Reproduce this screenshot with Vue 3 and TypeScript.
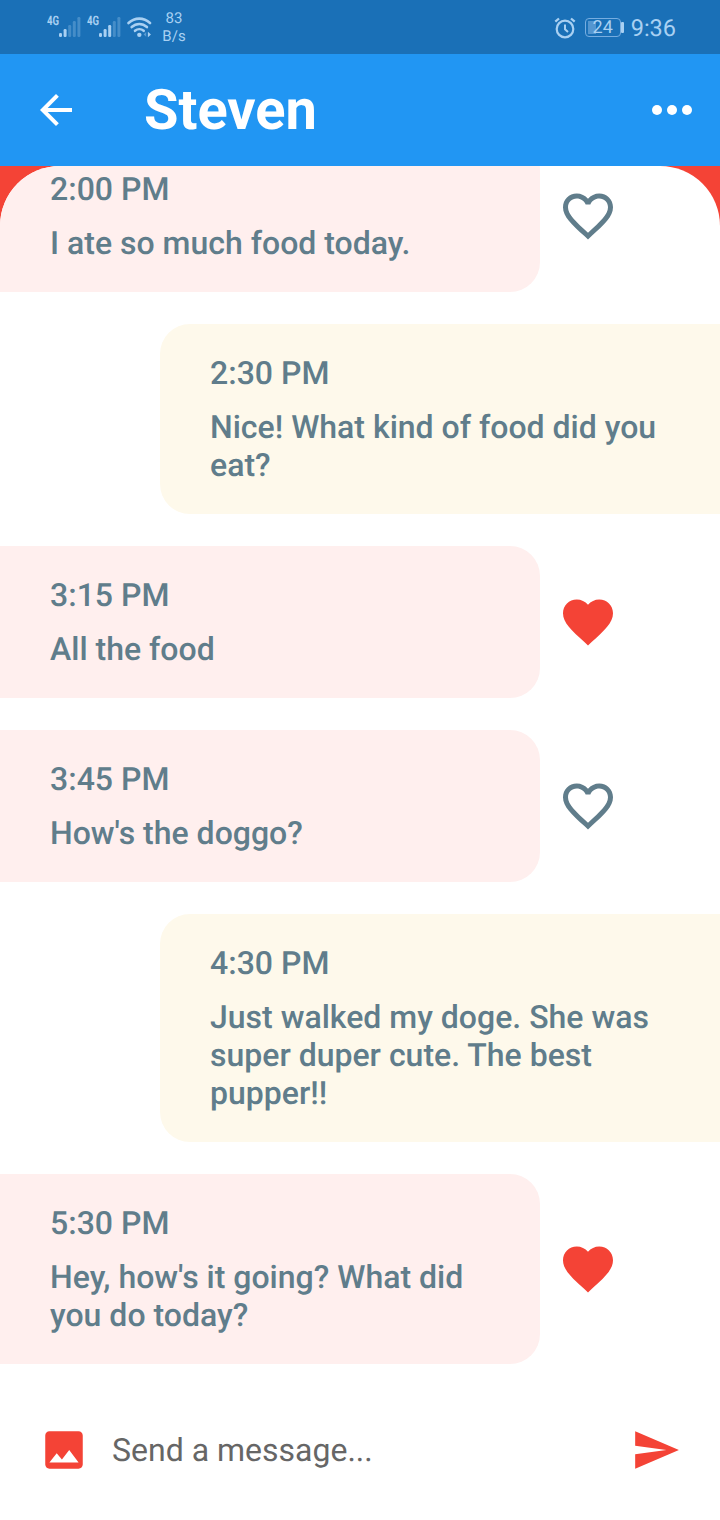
<script setup lang="ts">
interface Message {
  time: string
  text: string
  mine: boolean
  liked: boolean
}

const messages: Message[] = [
  { time: '2:00 PM', text: 'I ate so much food today.', mine: false, liked: false },
  { time: '2:30 PM', text: 'Nice! What kind of food did you eat?', mine: true, liked: false },
  { time: '3:15 PM', text: 'All the food', mine: false, liked: true },
  { time: '3:45 PM', text: "How's the doggo?", mine: false, liked: false },
  { time: '4:30 PM', text: 'Just walked my doge. She was super duper cute. The best pupper!!', mine: true, liked: false },
  { time: '5:30 PM', text: "Hey, how's it going? What did you do today?", mine: false, liked: true },
]

const signals: number[] = [2, 3]
</script>

<template>
  <div class="screen">
    <div class="status">
      <div class="status-left">
        <div v-for="(level, i) in signals" :key="i" class="signal">
          <span class="net">4G</span>
          <svg width="22" height="20" viewBox="0 0 22 20">
            <rect
              v-for="n in 5"
              :key="n"
              :x="(n - 1) * 4.6"
              :y="20 - n * 4"
              width="3"
              :height="n * 4"
              rx="1.2"
              fill="#a9d0f2"
              :opacity="n <= level ? 1 : 0.3"
            />
          </svg>
        </div>
        <svg class="wifi" width="25" height="21" viewBox="0 0 26 22">
          <g fill="none" stroke="#a9d0f2" stroke-width="2.7" stroke-linecap="round">
            <path d="M1.5 6.3C8.2 .2 17.4 .2 24 6.3" />
            <path d="M4.8 10.5C9.6 6.2 16 6.2 20.8 10.5" />
            <path d="M8.3 14.5C11 12.2 14.700 12.200 17.400 14.500" />
          </g>
          <circle cx="12.8" cy="18.7" r="2.3" fill="#a9d0f2" />
          <path d="M20 15.800v5l-2.700-2.500z" fill="#a9d0f2" opacity=".45" />
          <path d="M21.800 15.500v5.600l3.200-2.800z" fill="#a9d0f2" />
        </svg>
        <div class="speed"><span>83</span><span>B/s</span></div>
      </div>
      <div class="status-right">
        <svg class="alarm" width="22" height="22" viewBox="0 0 22 22" fill="none" stroke="#a9d0f2">
          <circle cx="11" cy="12" r="8.3" stroke-width="2.2" />
          <path d="M11 7.5v4.8l3 2.7" stroke-width="2" />
          <path d="M1.300 4.700L5 1.500M20.700 4.700L17 1.500" stroke-width="2.300" />
        </svg>
        <div class="battery"><span>24</span></div>
        <i class="battery-cap"></i>
        <span class="clock">9:36</span>
      </div>
    </div>

    <header class="bar">
      <svg width="48" height="48" viewBox="0 0 24 24" fill="#fff">
        <path d="M20 11H7.83l5.59-5.59L12 4l-8 8 8 8 1.41-1.41L7.83 13H20v-2z" />
      </svg>
      <h1>Steven</h1>
      <svg width="60" height="60" viewBox="0 0 24 24" fill="#fff">
        <circle cx="6" cy="12" r="2" />
        <circle cx="12" cy="12" r="2" />
        <circle cx="18" cy="12" r="2" />
      </svg>
    </header>

    <div class="backdrop">
      <main class="list">
        <div v-for="m in messages" :key="m.time" class="row" :class="{ mine: m.mine }">
          <div class="bubble">
            <div class="time">{{ m.time }}</div>
            <div class="text">{{ m.text }}</div>
          </div>
          <svg v-if="!m.mine" class="heart" :class="{ liked: m.liked }" width="60" height="60" viewBox="0 0 24 24">
            <path
              v-if="m.liked"
              d="M12 21.35l-1.45-1.32C5.4 15.36 2 12.28 2 8.5 2 5.42 4.42 3 7.5 3c1.74 0 3.41.81 4.5 2.09C13.09 3.81 14.76 3 16.5 3 19.58 3 22 5.42 22 8.5c0 3.78-3.4 6.86-8.55 11.54L12 21.35z"
            />
            <path
              v-else
              d="M16.5 3c-1.74 0-3.41.81-4.5 2.09C10.91 3.81 9.24 3 7.5 3 4.42 3 2 5.42 2 8.5c0 3.78 3.4 6.86 8.55 11.54L12 21.35l1.45-1.32C18.6 15.36 22 12.28 22 8.5 22 5.42 19.58 3 16.5 3zm-4.4 15.55l-.1.1-.1-.1C7.14 14.24 4 11.39 4 8.5 4 6.5 5.5 5 7.5 5c1.54 0 3.04.99 3.57 2.36h1.87C13.46 5.99 14.96 5 16.5 5c2 0 3.5 1.5 3.5 3.5 0 2.89-3.14 5.74-7.9 10.05z"
            />
          </svg>
        </div>
      </main>
    </div>

    <footer class="composer">
      <svg width="50" height="50" viewBox="0 0 24 24" fill="#f44336">
        <path d="M21 19V5c0-1.1-.9-2-2-2H5c-1.1 0-2 .9-2 2v14c0 1.1.9 2 2 2h14c1.1 0 2-.9 2-2zM8.5 13.5l2.5 3.01L14.5 12l4.5 6H5l3.5-4.500z" />
      </svg>
      <span class="hint">Send a message...</span>
      <svg width="50" height="50" viewBox="0 0 24 24" fill="#f44336">
        <path d="M2.01 21L23 12 2.01 3 2 10l15 2-15 2z" />
      </svg>
    </footer>
  </div>
</template>

<style>
body {
  margin: 0;
  background: #fff;
}
</style>

<style scoped>
.screen {
  width: 720px;
  height: 1520px;
  display: flex;
  flex-direction: column;
  overflow: hidden;
  background: #fff;
  font-family: Roboto, 'Liberation Sans', sans-serif;
  text-rendering: geometricPrecision;
}

svg {
  display: block;
  flex: none;
}

.status {
  height: 54px;
  flex: none;
  display: flex;
  justify-content: space-between;
  box-sizing: border-box;
  padding: 0 44px 0 47px;
  background: #1a70b7;
  color: #a9d0f2;
}

.status-left,
.status-right {
  display: flex;
  align-items: center;
}

.status-right {
  padding-top: 1px;
}

.signal {
  width: 40px;
  display: flex;
  align-items: flex-start;
}

.net {
  width: 12px;
  font-size: 13px;
  line-height: 10px;
  font-weight: 700;
  transform: scaleX(0.74);
  transform-origin: left;
}

.speed {
  margin-left: 10px;
  width: 24px;
  display: flex;
  flex-direction: column;
  align-items: center;
  font-size: 15px;
  line-height: 18px;
}

.battery {
  width: 36px;
  height: 19px;
  margin-left: 9px;
  box-sizing: border-box;
  border: 1.5px solid #76ade0;
  border-radius: 4px;
  background: linear-gradient(90deg, #5496d0 0 8px, transparent 8px) 2px 2px / 30px 13px no-repeat;
  font-size: 18px;
  line-height: 17px;
  text-align: center;
}

.battery-cap {
  width: 3px;
  height: 11px;
  border-radius: 1px;
  background: #a9d0f2;
}

.clock {
  margin-left: 7px;
  font-size: 23.5px;
  line-height: 28px;
}

.bar {
  height: 112px;
  flex: none;
  display: flex;
  align-items: center;
  box-sizing: border-box;
  padding: 0 18px 0 32px;
  background: #2196f3;
}

h1 {
  flex: 1;
  margin: 0 0 0 64px;
  color: #fff;
  font-size: 56px;
  line-height: 66px;
  font-weight: 700;
}

.backdrop {
  flex: 1;
  min-height: 0;
  background: #f44336;
}

.list {
  height: 100%;
  display: flex;
  flex-direction: column;
  justify-content: flex-end;
  gap: 32px;
  box-sizing: border-box;
  padding-bottom: 16px;
  overflow: hidden;
  border-radius: 60px 60px 0 0;
  background: #fff;
}

.row {
  flex: none;
  display: flex;
  align-items: center;
}

.bubble {
  width: 540px;
  box-sizing: border-box;
  padding: 30px 50px;
  border-radius: 0 30px 30px 0;
  background: #ffefee;
  color: #607d8b;
  font-size: 32px;
  line-height: 38px;
  font-weight: 500;
}

.mine .bubble {
  width: 560px;
  margin-left: 160px;
  border-radius: 30px 0 0 30px;
  background: #fef9eb;
}

.time {
  margin-bottom: 16px;
}

.heart {
  margin-left: 18px;
  fill: #607d8b;
}

.heart.liked {
  fill: #f44336;
}

.composer {
  height: 140px;
  flex: none;
  display: flex;
  align-items: center;
  box-sizing: border-box;
  padding: 0 39px;
}

.hint {
  flex: 1;
  margin-left: 23px;
  color: #666;
  font-size: 32px;
  line-height: 38px;
}
</style>
